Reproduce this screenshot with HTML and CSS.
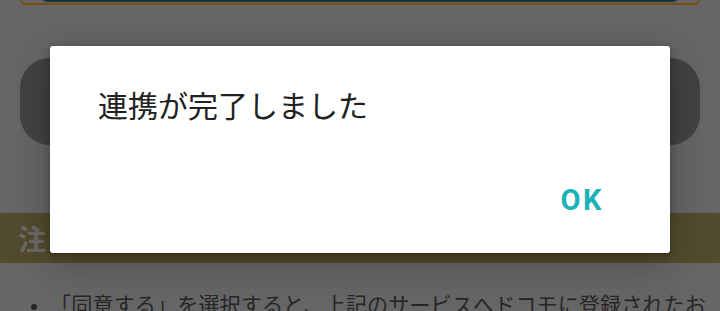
FILE: index.html
```html
<!DOCTYPE html>
<html lang="ja">
<head>
<meta charset="utf-8">
<link rel="stylesheet" href="styles.css">
</head>
<body>
<div class="page">
  <div class="topcard"><div class="topbtn"></div></div>
  <div class="pill"></div>
  <div class="band"><span class="band-title">注</span></div>
  <ul class="notes">
    <li>「同意する」を選択すると、上記のサービスへドコモに登録されたお客様情報が提供されます。</li>
  </ul>
</div>
<div class="dialog" role="dialog">
  <div class="dialog-title">連携が完了しました</div>
  <div class="dialog-actions"><button class="ok">OK</button></div>
</div>
</body>
</html>
```
FILE: styles.css
```css
html, body {
  margin: 0;
  padding: 0;
}
body {
  width: 720px;
  height: 311px;
  overflow: hidden;
  background: #666666;
  font-family: "Noto Sans CJK JP", "Noto Sans", sans-serif;
  position: relative;
}
.page {
  display: flex;
  flex-direction: column;
}
.topcard {
  margin: -20px 20px 0;
  height: 22px;
  border: 2px solid #7a4c0e;
  border-top: none;
  border-radius: 0 0 6px 6px;
  display: flex;
  align-items: flex-end;
  padding: 0 18px 1px;
}
.topbtn {
  flex: 1;
  height: 22px;
  background: #14303e;
  border-radius: 0 0 8px 8px;
}
.pill {
  margin: 53px 20px 0;
  height: 87px;
  background: #414243;
  border-radius: 30px;
}
.band {
  margin-top: 68px;
  height: 50px;
  background: #524b2d;
  display: flex;
  align-items: center;
  padding-left: 18px;
}
.band-title {
  font-size: 28px;
  font-weight: 700;
  color: #6a6a6a;
  line-height: 1;
}
.notes {
  margin: 26px 0 0;
  padding: 0 0 0 50px;
  font-size: 21.2px;
  line-height: 1.45;
  color: #262626;
}
.notes li::marker {
  font-size: 16px;
}
.dialog {
  position: absolute;
  left: 50px;
  top: 46px;
  width: 620px;
  height: 207px;
  background: #ffffff;
  border-radius: 3px;
  box-shadow: 0 10px 40px rgba(0, 0, 0, 0.25), 0 2px 6px rgba(0, 0, 0, 0.3);
  display: flex;
  flex-direction: column;
  justify-content: space-between;
  box-sizing: border-box;
  padding: 40px 0 0 48px;
}
.dialog-title {
  font-size: 30px;
  line-height: 1.2;
  color: #212121;
}
.dialog-actions {
  display: flex;
  justify-content: flex-end;
  padding: 0 66px 38px 0;
}
.ok {
  border: none;
  background: none;
  padding: 0;
  font-family: "Roboto", "Noto Sans", sans-serif;
  font-weight: 700;
  font-size: 29px;
  line-height: 1;
  letter-spacing: 2.5px;
  color: #19b3b9;
}
```
